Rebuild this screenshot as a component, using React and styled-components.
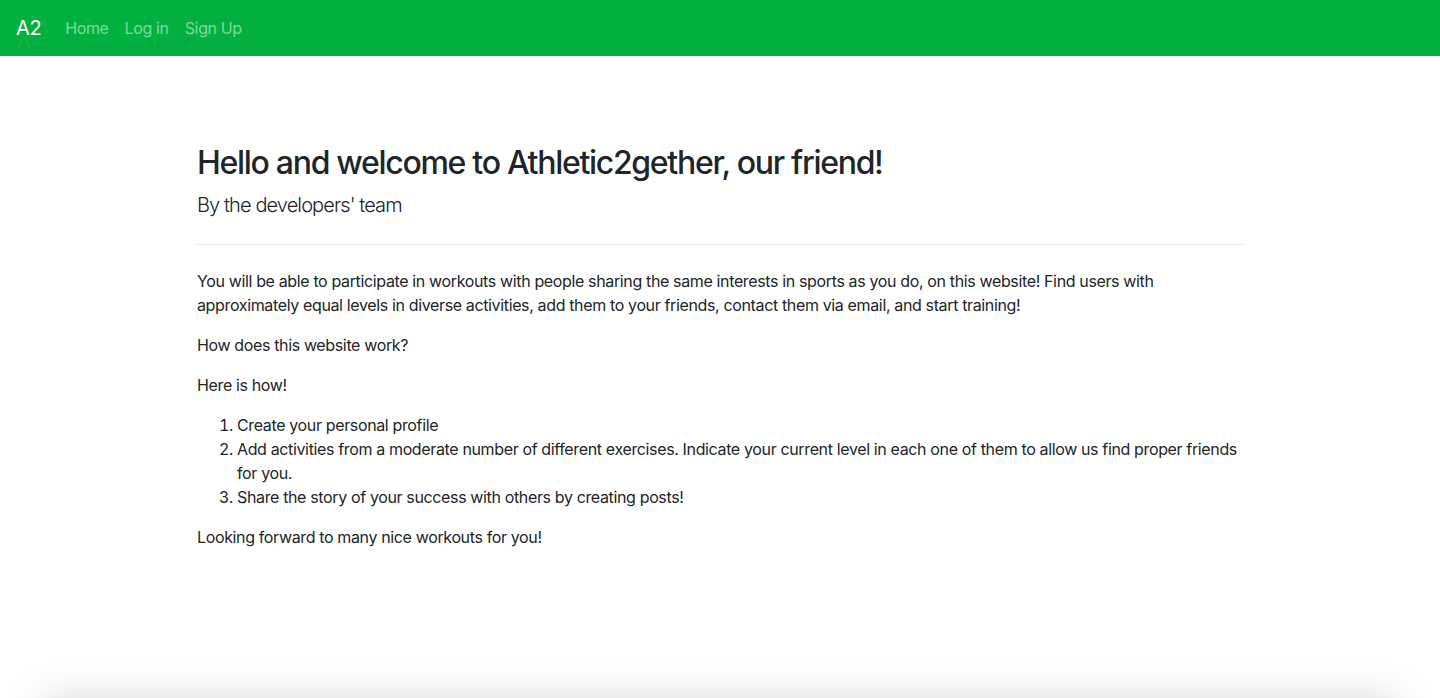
import React from 'react';
import styled, { createGlobalStyle } from 'styled-components';

const GlobalStyle = createGlobalStyle`
  *, *::before, *::after {
    box-sizing: border-box;
  }
  body {
    margin: 0;
    font-family: Inter, "Noto Sans", "Liberation Sans", sans-serif;
    font-size: 16px;
    line-height: 1.5;
    letter-spacing: -0.36px;
    color: #212529;
    background-color: #fff;
    overflow: hidden;
  }
`;

const Navbar = styled.nav`
  display: flex;
  align-items: center;
  height: 56px;
  padding: 8px 16px;
  background-color: #01b03e;
`;

const Brand = styled.a`
  margin-right: 16px;
  font-size: 20px;
  line-height: 30px;
  letter-spacing: -0.4px;
  color: #fff;
  text-decoration: none;
`;

const NavList = styled.ul`
  display: flex;
  margin: 0;
  padding: 0;
  list-style: none;
`;

const NavLink = styled.a`
  display: block;
  padding: 8px;
  color: rgba(255, 255, 255, 0.5);
  text-decoration: none;
`;

const Container = styled.div`
  max-width: 1140px;
  margin: 24px auto 0;
  padding: 0 15px;
`;

const Jumbotron = styled.section`
  padding: 64px 32px;
  margin-bottom: 32px;
  background-color: #fff;
`;

const Title = styled.h1`
  margin: 0 0 8px;
  font-size: 32px;
  font-weight: 500;
  line-height: 1.2;
  letter-spacing: -1.3px;
`;

const Lead = styled.p`
  margin: 0 0 16px;
  font-size: 20px;
  font-weight: 300;
  letter-spacing: -0.9px;
`;

const Divider = styled.hr`
  margin: 24px 0;
  border: 0;
  border-top: 1px solid rgba(0, 0, 0, 0.1);
`;

const Text = styled.p`
  margin: 0 0 16px;
`;

const Steps = styled.ol`
  margin: 0 0 16px;
  padding-left: 40px;
`;

const Footer = styled.footer`
  height: 60px;
  margin: 70px 42px 0;
  background: #fff;
  box-shadow: 0 0 40px rgba(0, 0, 0, 0.16);
`;

const links = ['Home', 'Log in', 'Sign Up'];

const steps = [
  'Create your personal profile',
  'Add activities from a moderate number of different exercises. Indicate your current level in each one of them to allow us find proper friends for you.',
  'Share the story of your success with others by creating posts!',
];

const App = () => {
  return (
    <>
      <GlobalStyle />
      <Navbar>
        <Brand href="#">A2</Brand>
        <NavList>
          {links.map((label) => (
            <li key={label}>
              <NavLink href="#">{label}</NavLink>
            </li>
          ))}
        </NavList>
      </Navbar>
      <Container>
        <Jumbotron>
          <Title>Hello and welcome to Athletic2gether, our friend!</Title>
          <Lead>By the developers' team</Lead>
          <Divider />
          <Text>
            You will be able to participate in workouts with people sharing the same interests in
            sports as you do, on this website! Find users with approximately equal levels in diverse
            activities, add them to your friends, contact them via email, and start training!
          </Text>
          <Text>How does this website work?</Text>
          <Text>Here is how!</Text>
          <Steps>
            {steps.map((step) => (
              <li key={step}>{step}</li>
            ))}
          </Steps>
          <Text>Looking forward to many nice workouts for you!</Text>
        </Jumbotron>
      </Container>
      <Footer />
    </>
  );
};

export default App;
